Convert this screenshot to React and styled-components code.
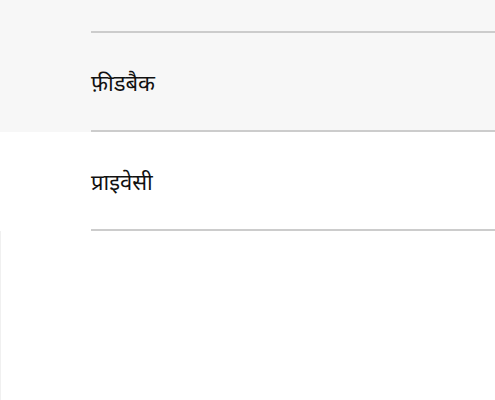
import React from 'react';
import styled, { createGlobalStyle } from 'styled-components';

const Global = createGlobalStyle`
  html, body {
    margin: 0;
    padding: 0;
    background: #ffffff;
    font-family: "Noto Sans", "Roboto", sans-serif;
  }
`;

const Page = styled.div`
  width: 495px;
  height: 400px;
  background: #ffffff;
  display: flex;
  flex-direction: column;
  overflow: hidden;
`;

const Row = styled.div`
  background: ${(p) => (p.pressed ? '#f7f7f7' : '#ffffff')};
  padding-left: 91px;
`;

const Inner = styled.div`
  height: ${(p) => p.h}px;
  display: flex;
  align-items: center;
  border-bottom: 2px solid #cccccc;
  box-sizing: border-box;
  font-size: 22px;
  color: #111111;
`;

const Filler = styled.div`
  flex: 1;
  border-left: 1px solid #f0f0f0;
`;

const items = [
  { label: '', h: 33, pressed: true },
  { label: 'फ़ीडबैक', h: 99, pressed: true },
  { label: 'प्राइवेसी', h: 99, pressed: false },
];

const App = () => (
  <>
    <Global />
    <Page>
      {items.map((it, i) => (
        <Row key={i} pressed={it.pressed}>
          <Inner h={it.h}>{it.label}</Inner>
        </Row>
      ))}
      <Filler />
    </Page>
  </>
);

export default App;
